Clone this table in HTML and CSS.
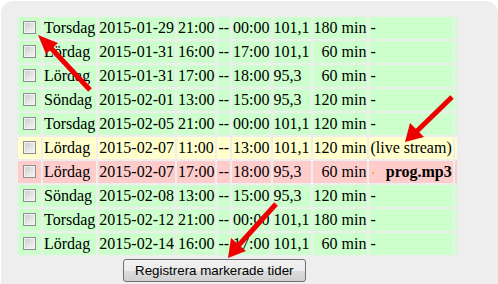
FILE: index.html
```html
<!DOCTYPE html>
<html lang="sv">
<head>
<meta charset="utf-8">
<title>Registrera tider</title>
<link rel="stylesheet" href="styles.css">
</head>
<body>
<div class="panel">
  <table class="times">
    <tr class="g"><td class="cb"><input type="checkbox"></td><td>Torsdag</td><td>2015-01-29</td><td>21:00</td><td>--</td><td>00:00</td><td>101,1</td><td class="r">180 min</td><td>-</td><td class="e"></td></tr>
    <tr class="g"><td class="cb"><input type="checkbox"></td><td>Lördag</td><td>2015-01-31</td><td>16:00</td><td>--</td><td>17:00</td><td>101,1</td><td class="r">60 min</td><td>-</td><td class="e"></td></tr>
    <tr class="g"><td class="cb"><input type="checkbox"></td><td>Lördag</td><td>2015-01-31</td><td>17:00</td><td>--</td><td>18:00</td><td>95,3</td><td class="r">60 min</td><td>-</td><td class="e"></td></tr>
    <tr class="g"><td class="cb"><input type="checkbox"></td><td>Söndag</td><td>2015-02-01</td><td>13:00</td><td>--</td><td>15:00</td><td>95,3</td><td class="r">120 min</td><td>-</td><td class="e"></td></tr>
    <tr class="g"><td class="cb"><input type="checkbox"></td><td>Torsdag</td><td>2015-02-05</td><td>21:00</td><td>--</td><td>00:00</td><td>101,1</td><td class="r">120 min</td><td>-</td><td class="e"></td></tr>
    <tr class="y"><td class="cb"><input type="checkbox"></td><td>Lördag</td><td>2015-02-07</td><td>11:00</td><td>--</td><td>13:00</td><td>101,1</td><td class="r">120 min</td><td>(live stream)</td><td class="e"></td></tr>
    <tr class="p"><td class="cb"><input type="checkbox"></td><td>Lördag</td><td>2015-02-07</td><td>17:00</td><td>--</td><td>18:00</td><td>95,3</td><td class="r">60 min</td><td class="file"><span class="dot"></span><b>prog.mp3</b></td><td class="e"></td></tr>
    <tr class="g"><td class="cb"><input type="checkbox"></td><td>Söndag</td><td>2015-02-08</td><td>13:00</td><td>--</td><td>15:00</td><td>95,3</td><td class="r">120 min</td><td>-</td><td class="e"></td></tr>
    <tr class="g"><td class="cb"><input type="checkbox"></td><td>Torsdag</td><td>2015-02-12</td><td>21:00</td><td>--</td><td>00:00</td><td>101,1</td><td class="r">180 min</td><td>-</td><td class="e"></td></tr>
    <tr class="g"><td class="cb"><input type="checkbox"></td><td>Lördag</td><td>2015-02-14</td><td>16:00</td><td>--</td><td>17:00</td><td>101,1</td><td class="r">60 min</td><td>-</td><td class="e"></td></tr>
  </table>
  <div class="actions"><button type="button" class="btn">Registrera markerade tider</button></div>
</div>
<svg class="arrows" width="498" height="284" viewBox="0 0 498 284">
  <g stroke="#ee0000" stroke-width="5" stroke-linecap="butt">
    <line x1="90" y1="90" x2="50" y2="47"/>
    <line x1="452" y1="97" x2="416" y2="132"/>
    <line x1="276" y1="204" x2="238" y2="246"/>
  </g>
  <g fill="#ee0000">
    <polygon points="38,35 58,43 46,54"/>
    <polygon points="405,142 410,123 424,137"/>
    <polygon points="228,258 231,238 246,251"/>
  </g>
</svg>
</body>
</html>
```

FILE: styles.css
```css
html, body {
  margin: 0;
  padding: 0;
  background: #ffffff;
}
body {
  position: relative;
  width: 498px;
  height: 284px;
  overflow: hidden;
  font-family: "Liberation Serif", "Times New Roman", serif;
  font-size: 16px;
  color: #000;
}
.panel {
  box-sizing: border-box;
  height: 283px;
  background: #eeeeee;
  border-radius: 12px 12px 0 0;
  margin: 1px 0 0 1px;
  padding: 14px 15px 0 15px;
}
.times {
  border-collapse: separate;
  border-spacing: 2px;
}
.times td {
  padding: 1px;
  height: 20px;
  white-space: nowrap;
  vertical-align: middle;
  line-height: 18px;
}
.times td.r { text-align: right; }
.times td.e { padding: 0 1px; width: 0; }
.times td.cb { padding: 1px; }
.g td { background: #ccffcc; }
.y td { background: #ffffcc; }
.p td { background: #ffcccc; }
.times td.file { text-align: right; }
.dot {
  display: inline-block;
  width: 2px;
  height: 2px;
  background: #ffaa55;
  margin-right: 12px;
  vertical-align: 3px;
}
input[type="checkbox"] {
  appearance: none;
  -webkit-appearance: none;
  display: block;
  width: 13px;
  height: 13px;
  margin: 2px 4px 3px 4px;
  box-sizing: border-box;
  border: 1px solid #8f8f8f;
  box-shadow: inset 0 0 0 1px #f3f3f3;
  background: linear-gradient(135deg, #c9c9c9 0%, #e6e6e6 55%, #f7f7f7 100%);
}
.actions {
  padding: 2px 0 0 107px;
}
.btn {
  font-family: "Liberation Sans", Arial, sans-serif;
  font-size: 13.33px;
  color: #000;
  height: 23px;
  padding: 0 11px;
  border: 1px solid #707070;
  border-radius: 3px;
  background: linear-gradient(#f2f2f2 0%, #ebebeb 50%, #dddddd 51%, #cfcfcf 100%);
}
.arrows {
  position: absolute;
  left: 0;
  top: 0;
}
```
